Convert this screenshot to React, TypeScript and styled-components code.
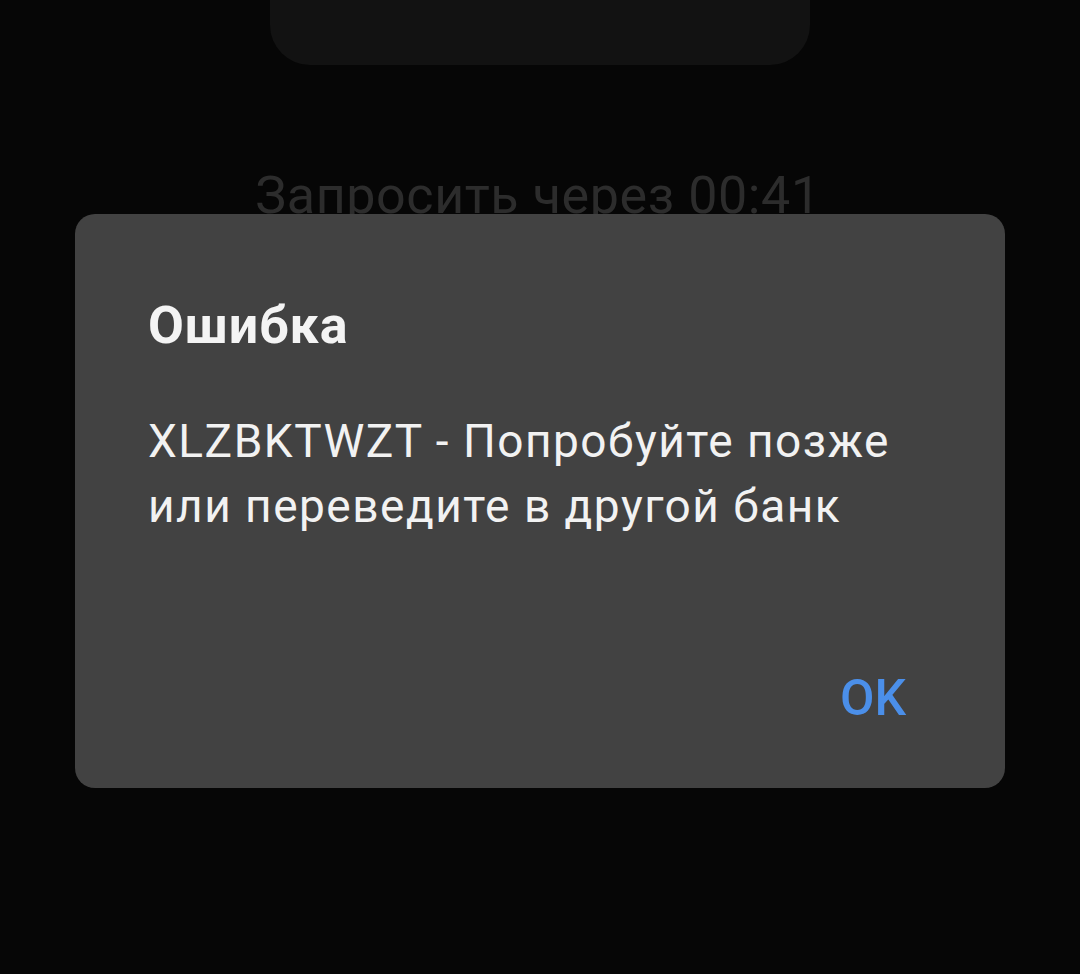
import React from "react";
import styled, { createGlobalStyle } from "styled-components";

const GlobalStyle = createGlobalStyle`
  html, body {
    margin: 0;
    padding: 0;
    background: #060606;
  }
  body {
    font-family: Roboto, "Noto Sans", "Liberation Sans", sans-serif;
  }
`;

const Screen = styled.div`
  position: relative;
  width: 1080px;
  height: 974px;
  overflow: hidden;
  background: #060606;
  display: flex;
  flex-direction: column;
  align-items: center;
`;

const TopCard = styled.div`
  width: 540px;
  height: 65px;
  background: #121212;
  border-radius: 0 0 40px 40px;
`;

const Timer = styled.div`
  margin-top: 101px;
  margin-left: -4px;
  font-size: 52px;
  line-height: 60px;
  letter-spacing: 0.6px;
  color: #2c2c2c;
`;

const Overlay = styled.div`
  position: absolute;
  inset: 0;
  display: flex;
  justify-content: center;
  align-items: flex-start;
  padding-top: 214px;
`;

const Dialog = styled.div`
  width: 930px;
  height: 574px;
  box-sizing: border-box;
  background: #424242;
  border-radius: 20px;
  padding: 81px 73px 0 73px;
  display: flex;
  flex-direction: column;
`;

const Title = styled.h2`
  margin: 0;
  font-size: 52px;
  line-height: 62px;
  font-weight: 700;
  letter-spacing: 1px;
  color: #f4f4f4;
`;

const Message = styled.p`
  margin: 52px 0 0;
  font-size: 46px;
  line-height: 65px;
  font-weight: 400;
  letter-spacing: 1.5px;
  color: #f2f2f2;
`;

const Actions = styled.div`
  margin-top: auto;
  margin-bottom: 60px;
  display: flex;
  justify-content: flex-end;
`;

const Button = styled.button`
  background: none;
  border: none;
  padding: 0;
  margin-right: 26px;
  font-family: inherit;
  font-size: 50px;
  line-height: 60px;
  font-weight: 500;
  color: #4b8fe9;
  cursor: pointer;
`;

export default function App() {
  return (
    <>
      <GlobalStyle />
      <Screen>
        <TopCard />
        <Timer>Запросить через 00:41</Timer>
        <Overlay>
          <Dialog>
            <Title>Ошибка</Title>
            <Message>
              XLZBKTWZT - Попробуйте позже
              <br />
              или переведите в другой банк
            </Message>
            <Actions>
              <Button>OK</Button>
            </Actions>
          </Dialog>
        </Overlay>
      </Screen>
    </>
  );
}
